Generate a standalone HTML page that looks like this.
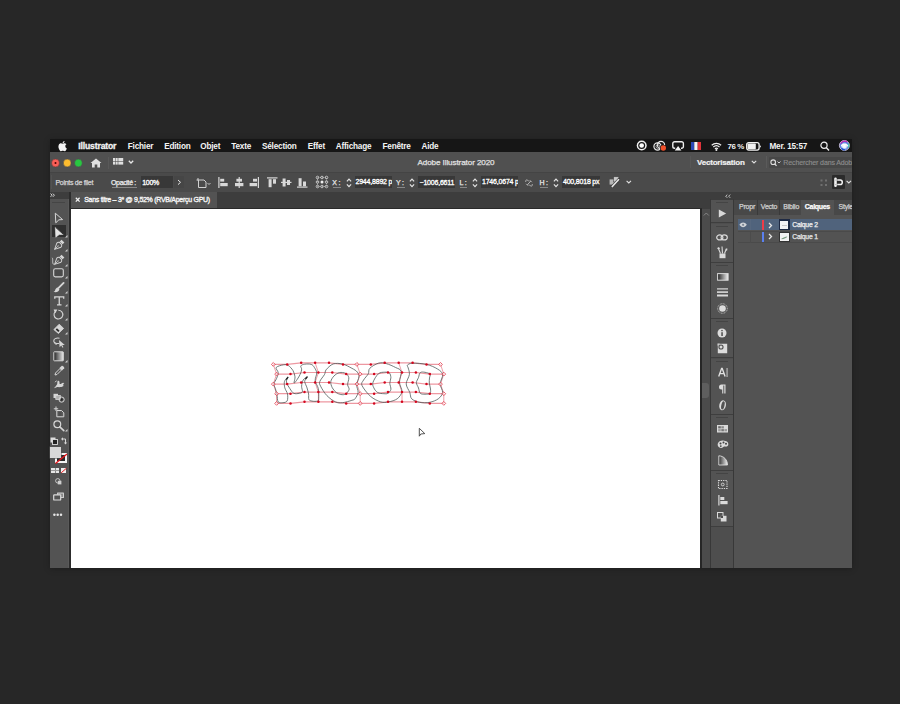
<!DOCTYPE html>
<html><head><meta charset="utf-8">
<style>
html,body{margin:0;padding:0;}
body{width:900px;height:704px;background:#272727;position:relative;overflow:hidden;font-family:"Liberation Sans",sans-serif;}
.a{position:absolute;}
.t{position:absolute;white-space:nowrap;line-height:10px;color:#e6e6e6;}
.mb{font-size:8.2px;font-weight:bold;color:#f4f4f4;top:141.7px;letter-spacing:-0.2px;}
.sm{font-size:7px;letter-spacing:-0.2px;color:#dcdcdc;-webkit-text-stroke:0.25px currentColor;}
svg{position:absolute;overflow:visible;}
</style></head>
<body>
<!-- window -->
<div class="a" style="left:50px;top:139px;width:802px;height:429px;background:#3d3d3d;box-shadow:0 1px 6px rgba(0,0,0,0.25);"></div>
<!-- menubar -->
<div class="a" style="left:50px;top:139px;width:802px;height:13px;background:#161616;"></div>
<!-- title bar -->
<div class="a" style="left:50px;top:152px;width:802px;height:20px;background:#505050;"></div>
<!-- control bar -->
<div class="a" style="left:50px;top:172px;width:802px;height:20px;background:#4a4a4a;border-top:1px solid #444;box-sizing:border-box;"></div>
<!-- below area -->
<div class="a" style="left:50px;top:192px;width:802px;height:376px;background:#3d3d3d;"></div>
<!-- left toolbar -->
<div class="a" style="left:50px;top:199px;width:19px;height:369px;background:#535353;"></div>
<div class="a" style="left:68px;top:199px;width:1px;height:369px;background:#5a5a5a;"></div>
<div class="a" style="left:69px;top:192px;width:2px;height:376px;background:#2c2c2c;"></div>
<!-- tab bar -->
<div class="a" style="left:71px;top:192px;width:629px;height:16px;background:#3d3d3d;"></div>
<div class="a" style="left:71px;top:192px;width:146px;height:16px;background:#535353;"></div>
<div class="a" style="left:71px;top:208px;width:631px;height:1px;background:#2a2a2a;"></div>
<!-- canvas -->
<div class="a" style="left:71px;top:209px;width:629px;height:359px;background:#ffffff;"></div>
<div class="a" style="left:700px;top:209px;width:2px;height:359px;background:#262626;"></div>
<!-- scrollbar col -->
<div class="a" style="left:702px;top:209px;width:8px;height:359px;background:#4b4b4b;"></div>
<div class="a" style="left:710px;top:199px;width:1px;height:369px;background:#383838;"></div>
<!-- icon column -->
<div class="a" style="left:711px;top:199.5px;width:22px;height:368.5px;background:#4e4e4e;"></div>
<div class="a" style="left:733px;top:199px;width:1px;height:369px;background:#383838;"></div>
<!-- panel -->
<div class="a" style="left:734px;top:199.5px;width:118px;height:15px;background:#444444;"></div>
<div class="a" style="left:734px;top:214.5px;width:118px;height:353.5px;background:#535353;"></div>

<!-- MENUBAR CONTENT -->
<svg style="left:58px;top:140.5px" width="9" height="10" viewBox="0 0 17 20"><path fill="#f4f4f4" d="M14.1 10.6c0-2.6 2.1-3.8 2.2-3.9-1.2-1.8-3.1-2-3.7-2-1.6-.2-3.1.9-3.9.9-.8 0-2-.9-3.3-.9C3.700 4.800 2.100 5.800 1.200 7.300-.6 10.500.7 15.200 2.500 17.800c.9 1.300 1.900 2.700 3.300 2.600 1.300-.1 1.800-.8 3.400-.8s2 .8 3.400.8c1.400 0 2.300-1.300 3.100-2.600 1-1.500 1.400-2.900 1.400-3-.1 0-2.900-1.100-3-4.200zM11.500 2.900C12.200 2.100 12.700.900 12.600-.2c-1 0-2.200.7-2.900 1.500-.6.700-1.200 1.900-1 3 1.100.1 2.200-.6 2.800-1.400z"/></svg>
<div class="t mb" style="left:78.3px;top:141.4px;font-size:8.6px;letter-spacing:-0.15px;-webkit-text-stroke:0.3px #f4f4f4;">Illustrator</div>
<div class="t mb" style="left:127.8px;">Fichier</div>
<div class="t mb" style="left:164.2px;">Edition</div>
<div class="t mb" style="left:200.3px;">Objet</div>
<div class="t mb" style="left:231.3px;">Texte</div>
<div class="t mb" style="left:262px;">Sélection</div>
<div class="t mb" style="left:307.8px;">Effet</div>
<div class="t mb" style="left:335.8px;">Affichage</div>
<div class="t mb" style="left:382.5px;">Fenêtre</div>
<div class="t mb" style="left:421.5px;">Aide</div>
<!-- status icons -->
<svg style="left:636px;top:140px" width="12" height="12"><circle cx="5.7" cy="5.5" r="5" fill="#f2f2f2"/><circle cx="5.7" cy="5.5" r="3.5" fill="#161616"/><circle cx="5.7" cy="5.5" r="2.3" fill="#ffffff"/></svg>
<svg style="left:653px;top:140px" width="15" height="12"><circle cx="4.5" cy="6.5" r="3.6" fill="none" stroke="#e8e8e8" stroke-width="1.2"/><circle cx="8" cy="5" r="3.6" fill="none" stroke="#e8e8e8" stroke-width="1.2"/><circle cx="4.8" cy="6.5" r="1.8" fill="none" stroke="#cfcfcf" stroke-width="0.8"/><circle cx="10.3" cy="8" r="3.3" fill="#161616"/><circle cx="10.3" cy="8" r="2.7" fill="#f0502a"/></svg>
<svg style="left:672px;top:140.5px" width="13" height="11"><path d="M3.2 7.2 H2.6 A1.8 1.8 0 0 1 0.8 5.4 V2.6 A1.8 1.8 0 0 1 2.6 0.8 H9.6 A1.8 1.8 0 0 1 11.4 2.6 V5.4 A1.8 1.8 0 0 1 9.6 7.2 H9" fill="none" stroke="#ececec" stroke-width="1.4"/><path d="M6.1 5 L9.4 9.6 H2.8 Z" fill="#f4f4f4"/></svg>
<svg style="left:691px;top:141.5px" width="10" height="8"><rect x="0" y="0" width="3.3" height="8" fill="#2a48b8"/><rect x="3.3" y="0" width="3.4" height="8" fill="#f4f4f4"/><rect x="6.7" y="0" width="3.3" height="8" fill="#e0333a"/></svg>
<svg style="left:710.5px;top:141.5px" width="11" height="9" viewBox="0 0 11 9"><path d="M0.7 3.2 A7 7 0 0 1 10.1 3.2" fill="none" stroke="#eee" stroke-width="1.2"/><path d="M2.3 5 A4.6 4.6 0 0 1 8.5 5" fill="none" stroke="#eee" stroke-width="1.2"/><path d="M3.9 6.7 A2.3 2.3 0 0 1 6.9 6.7" fill="none" stroke="#eee" stroke-width="1.2"/><circle cx="5.4" cy="8" r="1" fill="#eee"/></svg>
<div class="t mb" style="left:727.5px;letter-spacing:-0.4px;font-size:7.9px;">76 %</div>
<svg style="left:745.5px;top:141.5px" width="16" height="9"><rect x="0.7" y="0.7" width="12.4" height="7.4" rx="2" fill="none" stroke="#f2f2f2" stroke-width="1.3"/><rect x="1.6" y="1.6" width="8.2" height="5.6" rx="0.8" fill="#f2f2f2"/><path d="M13.8 2.8 L15 4.4 L13.8 6 Z" fill="#f2f2f2"/></svg>
<div class="t mb" style="left:769.5px;letter-spacing:-0.2px;">Mer. 15:57</div>
<svg style="left:820px;top:140.5px" width="10" height="11"><circle cx="4" cy="4.3" r="3.1" fill="none" stroke="#eee" stroke-width="1.2"/><path d="M6.2 6.6 L9 9.6" stroke="#eee" stroke-width="1.4"/></svg>
<svg style="left:838.5px;top:140px" width="11" height="11"><defs><radialGradient id="sr" cx="0.5" cy="0.55" r="0.55"><stop offset="0" stop-color="#ffffff"/><stop offset="0.35" stop-color="#e8f0ff"/><stop offset="0.7" stop-color="#4a7ae0"/><stop offset="1" stop-color="#9a40c8"/></radialGradient></defs><circle cx="5.4" cy="5.5" r="5" fill="url(#sr)" stroke="#d8d8e8" stroke-width="0.8"/><path d="M1.8 3.5 A4.4 4.4 0 0 1 8 1.8" fill="none" stroke="#c02cb0" stroke-width="1.4"/><path d="M9.2 3.5 A4.4 4.4 0 0 1 9.3 7.5" fill="none" stroke="#40c8b0" stroke-width="1.2"/><path d="M2.5 8.5 A4.4 4.4 0 0 0 6 9.8" fill="none" stroke="#2050c8" stroke-width="1.3"/><path d="M2 6.2 C3.5 4 4.5 4 5.5 5.3 C6.5 4 7.5 4 9 6.2" fill="none" stroke="#fff" stroke-width="1.1"/></svg>

<!-- TITLE BAR CONTENT -->
<svg style="left:50px;top:157px" width="40" height="12"><circle cx="5.5" cy="6" r="3.9" fill="#fc5f57" stroke="#5a3a3a" stroke-width="0.5"/><circle cx="5.5" cy="6" r="1" fill="#4d0000"/><circle cx="17.2" cy="6" r="3.9" fill="#fdbc2e" stroke="#3a4050" stroke-width="0.5"/><circle cx="28.4" cy="6" r="3.9" fill="#28c840" stroke="#503a50" stroke-width="0.5"/></svg>
<svg style="left:89.5px;top:157.5px" width="12" height="10"><path d="M0.5 5 L6 0.5 L11.5 5 L10 5 L10 9.5 L7.3 9.5 L7.3 6.5 L4.7 6.5 L4.7 9.5 L2 9.5 L2 5 Z" fill="#e0e0e0"/></svg>
<div class="a" style="left:107.5px;top:156.5px;width:1px;height:12px;background:#595959;"></div>
<svg style="left:112.8px;top:158.2px" width="11" height="7"><rect x="0" y="0" width="2.1" height="3" fill="#e0e0e0"/><rect x="2.6" y="0" width="2.1" height="3" fill="#e0e0e0"/><rect x="0" y="3.6" width="2.1" height="3" fill="#e0e0e0"/><rect x="2.6" y="3.6" width="2.1" height="3" fill="#e0e0e0"/><rect x="5.3" y="0" width="4.9" height="3" fill="#e0e0e0"/><rect x="5.3" y="3.6" width="4.9" height="3" fill="#e0e0e0"/></svg>
<svg style="left:127.6px;top:160px" width="7" height="5"><path d="M0.8 0.8 L3 3 L5.2 0.8" fill="none" stroke="#e8e8e8" stroke-width="1.3"/></svg>
<div class="t" style="left:417.5px;top:158px;font-size:8.1px;color:#e2e2e2;letter-spacing:-0.1px;-webkit-text-stroke:0.25px #e2e2e2;">Adobe Illustrator 2020</div>
<div class="a" style="left:690px;top:156px;width:1px;height:12px;background:#575757;"></div>
<div class="t" style="left:697px;top:157.5px;font-size:8px;font-weight:bold;color:#f0f0f0;letter-spacing:-0.2px;-webkit-text-stroke:0.2px #f0f0f0;">Vectorisation</div>
<svg style="left:751px;top:160px" width="7" height="5"><path d="M0.8 0.8 L3 3 L5.2 0.8" fill="none" stroke="#e0e0e0" stroke-width="1.1"/></svg>
<div class="a" style="left:766px;top:156px;width:1px;height:12px;background:#5a5a5a;"></div>
<div class="a" style="left:769px;top:157px;width:83px;height:11px;background:#474747;border-radius:1px;"></div>
<svg style="left:770px;top:158.5px" width="12" height="8"><circle cx="3.2" cy="3.2" r="2.3" fill="none" stroke="#dedede" stroke-width="1.1"/><path d="M4.8 4.8 L6.5 6.8" stroke="#dedede" stroke-width="1.2"/><path d="M7.5 2.5 L9 4 L10.5 2.5" fill="none" stroke="#dedede" stroke-width="0.9"/></svg>
<div style="position:absolute;left:769px;top:157px;width:83px;height:11px;overflow:hidden;"><div class="t" style="left:14.3px;top:1.3px;font-size:7px;color:#8c8c8c;letter-spacing:-0.12px;-webkit-text-stroke:0.15px #8c8c8c;">Rechercher dans Adobe Stock</div></div>

<!-- CONTROL BAR CONTENT -->
<div class="a" style="left:50.5px;top:175px;width:1px;height:14px;background:#525252;"></div>
<div class="t sm" style="left:55.5px;top:177.5px;letter-spacing:-0.3px;color:#d4d4d4;">Points de filet</div>
<div class="t sm" style="left:111px;top:177.5px;color:#ececec;letter-spacing:-0.35px;">Opacité :</div>
<div class="a" style="left:111.5px;top:186.5px;width:25px;height:0;border-top:1px solid rgba(210,210,210,0.45);"></div>
<div class="a" style="left:141px;top:176.2px;width:32.3px;height:11.6px;background:#383838;"></div>
<div class="t sm" style="left:142.3px;top:177.5px;color:#ffffff;-webkit-text-stroke:0.3px #fff;letter-spacing:-0.35px;">100%</div>
<div class="a" style="left:174.2px;top:176.2px;width:10px;height:11.6px;background:#464646;"></div>
<svg style="left:176.5px;top:179px" width="5" height="7"><path d="M1 1 L3.5 3.3 L1 5.6" fill="none" stroke="#e6e6e6" stroke-width="1"/></svg>
<!-- transform -->
<svg style="left:195.5px;top:176.5px" width="16" height="12"><path d="M2 1 V3.5 M0.5 3 H8 L10 5 V10.5 H2.5 V3" fill="none" stroke="#d0d0d0" stroke-width="1"/><path d="M11.5 6 L13 7.5 L14.5 6" fill="none" stroke="#d0d0d0" stroke-width="0.9"/></svg>
<!-- align icons -->
<svg style="left:218px;top:176.5px" width="11" height="11"><rect x="0.3" y="0" width="1.2" height="11" fill="#d8d8d8"/><rect x="2.2" y="1.8" width="4" height="2.8" fill="#d8d8d8"/><rect x="2.2" y="6" width="7.5" height="3.2" fill="#d8d8d8"/></svg>
<svg style="left:233.5px;top:176.5px" width="11" height="11"><rect x="4.6" y="0" width="1.2" height="11" fill="#d8d8d8"/><rect x="2.4" y="1.8" width="5.6" height="2.8" fill="#d8d8d8"/><rect x="1" y="6" width="8.4" height="3.2" fill="#d8d8d8"/></svg>
<svg style="left:248.5px;top:176.5px" width="11" height="11"><rect x="8.8" y="0" width="1.2" height="11" fill="#d8d8d8"/><rect x="4" y="1.8" width="4" height="2.8" fill="#d8d8d8"/><rect x="0.6" y="6" width="7.5" height="3.2" fill="#d8d8d8"/></svg>
<svg style="left:266.5px;top:176.5px" width="11" height="11"><rect x="0" y="0.3" width="10.5" height="1.2" fill="#d8d8d8"/><rect x="1.6" y="2.2" width="3" height="8" fill="#d8d8d8"/><rect x="6" y="2.2" width="3" height="4.5" fill="#d8d8d8"/></svg>
<svg style="left:281px;top:176.5px" width="11" height="11"><rect x="0" y="4.8" width="10.5" height="1.2" fill="#d8d8d8"/><rect x="1.6" y="1.5" width="3" height="8" fill="#d8d8d8"/><rect x="6" y="3" width="3" height="5" fill="#d8d8d8"/></svg>
<svg style="left:296.5px;top:176.5px" width="11" height="11"><rect x="0" y="9.5" width="10.5" height="1.2" fill="#d8d8d8"/><rect x="1.6" y="1.2" width="3" height="8" fill="#d8d8d8"/><rect x="6" y="4.5" width="3" height="4.8" fill="#d8d8d8"/></svg>
<!-- reference point -->
<svg style="left:315.5px;top:176px" width="12" height="12"><rect x="1.5" y="1.5" width="9" height="9" fill="none" stroke="#bcbcbc" stroke-width="0.8" stroke-dasharray="1.2 1.2"/><circle cx="1.5" cy="1.5" r="1.3" fill="none" stroke="#d8d8d8" stroke-width="0.8"/><circle cx="6" cy="1.5" r="1.3" fill="none" stroke="#d8d8d8" stroke-width="0.8"/><circle cx="10.5" cy="1.5" r="1.3" fill="none" stroke="#d8d8d8" stroke-width="0.8"/><circle cx="1.5" cy="6" r="1.3" fill="none" stroke="#d8d8d8" stroke-width="0.8"/><circle cx="6" cy="6" r="1.5" fill="#f0f0f0"/><circle cx="10.5" cy="6" r="1.3" fill="none" stroke="#d8d8d8" stroke-width="0.8"/><circle cx="1.5" cy="10.5" r="1.3" fill="none" stroke="#d8d8d8" stroke-width="0.8"/><circle cx="6" cy="10.5" r="1.3" fill="none" stroke="#d8d8d8" stroke-width="0.8"/><circle cx="10.5" cy="10.5" r="1.3" fill="none" stroke="#d8d8d8" stroke-width="0.8"/></svg>
<!-- X Y L H -->
<div class="t sm" style="left:332.2px;top:177.5px;color:#e8e8e8;">X :</div>
<div class="a" style="left:332.5px;top:186.8px;width:8px;height:0;border-top:1px solid rgba(210,210,210,0.45);"></div>
<svg style="left:345.5px;top:176.5px" width="7" height="12"><path d="M0.9 4.3 L3 2.1 L5.1 4.3 M0.9 7.4 L3 9.6 L5.1 7.4" fill="none" stroke="#e4e4e4" stroke-width="1.2"/></svg>
<div class="a" style="left:354.7px;top:176.2px;width:37px;height:11.6px;background:#383838;"></div>
<div class="a" style="left:354.7px;top:176.2px;width:37px;height:11.6px;overflow:hidden;"><div class="t sm" style="left:0.8px;top:1.3px;color:#ffffff;-webkit-text-stroke:0.3px #fff;">2944,8892 p</div></div>
<div class="t sm" style="left:396px;top:177.5px;color:#e8e8e8;">Y :</div>
<div class="a" style="left:396.5px;top:186.8px;width:8px;height:0;border-top:1px solid rgba(210,210,210,0.45);"></div>
<svg style="left:408.8px;top:176.5px" width="7" height="12"><path d="M0.9 4.3 L3 2.1 L5.1 4.3 M0.9 7.4 L3 9.6 L5.1 7.4" fill="none" stroke="#e4e4e4" stroke-width="1.2"/></svg>
<div class="a" style="left:418.3px;top:176.2px;width:36.7px;height:11.6px;background:#383838;"></div>
<div class="t sm" style="left:419.5px;top:177.5px;color:#ffffff;-webkit-text-stroke:0.3px #fff;">−1006,6611</div>
<div class="t sm" style="left:459.5px;top:177.5px;color:#e8e8e8;">L :</div>
<div class="a" style="left:459.7px;top:186.8px;width:7.5px;height:0;border-top:1px solid rgba(210,210,210,0.45);"></div>
<svg style="left:472.3px;top:176.5px" width="7" height="12"><path d="M0.9 4.3 L3 2.1 L5.1 4.3 M0.9 7.4 L3 9.6 L5.1 7.4" fill="none" stroke="#e4e4e4" stroke-width="1.2"/></svg>
<div class="a" style="left:481.3px;top:176.2px;width:37px;height:11.6px;background:#383838;"></div>
<div class="a" style="left:481.3px;top:176.2px;width:37px;height:11.6px;overflow:hidden;"><div class="t sm" style="left:0.7px;top:1.3px;color:#ffffff;-webkit-text-stroke:0.3px #fff;">1746,0674 p</div></div>
<svg style="left:524.5px;top:178.5px" width="8" height="8"><path d="M1 3 C0 2 1 0.5 2.5 1 L4 2.5 M4 5.5 L5.5 7 C7 7.5 8 6 7 5 M2.2 5.8 L5.8 2.2" fill="none" stroke="#bdbdbd" stroke-width="0.9"/><path d="M3.2 6.8 L1.2 4.8 M4.8 1.2 L6.8 3.2" stroke="#bdbdbd" stroke-width="0.9"/></svg>
<div class="t sm" style="left:539.5px;top:177.5px;color:#e8e8e8;">H :</div>
<div class="a" style="left:539.5px;top:186.8px;width:8px;height:0;border-top:1px solid rgba(210,210,210,0.45);"></div>
<svg style="left:553px;top:176.5px" width="7" height="12"><path d="M0.9 4.3 L3 2.1 L5.1 4.3 M0.9 7.4 L3 9.6 L5.1 7.4" fill="none" stroke="#e4e4e4" stroke-width="1.2"/></svg>
<div class="a" style="left:561.6px;top:176.2px;width:38.4px;height:11.6px;background:#383838;"></div>
<div class="a" style="left:561.6px;top:176.2px;width:38.4px;height:11.6px;overflow:hidden;"><div class="t sm" style="left:1.4px;top:1.3px;color:#ffffff;-webkit-text-stroke:0.3px #fff;">400,8018 px</div></div>
<svg style="left:609px;top:176px" width="12" height="12"><rect x="0.6" y="3.4" width="5.2" height="5.2" fill="#b8b8b8"/><rect x="4.6" y="0.8" width="5.2" height="5.2" fill="#c8c8c8" stroke="#3a3a3a" stroke-width="0.5"/><path d="M3.2 10.6 L9.6 3.6" stroke="#2e2e2e" stroke-width="2.8" stroke-linecap="round"/><path d="M3.2 10.6 L9.6 3.6" stroke="#e2e2e2" stroke-width="1.6" stroke-linecap="round"/></svg>
<svg style="left:626px;top:180px" width="6" height="5"><path d="M0.6 0.8 L2.8 3 L5 0.8" fill="none" stroke="#e0e0e0" stroke-width="1.1"/></svg>
<svg style="left:819.5px;top:178.5px" width="8" height="8"><rect x="0.5" y="0.5" width="2" height="2" fill="#707070"/><rect x="5" y="0.5" width="2" height="2" fill="#707070"/><rect x="0.5" y="5" width="2" height="2" fill="#707070"/><rect x="5" y="5" width="2" height="2" fill="#707070"/></svg>
<div class="a" style="left:832px;top:175.4px;width:13px;height:13.2px;background:#2b2b2b;border-radius:1px;"></div>
<svg style="left:833px;top:176px" width="12" height="12"><rect x="1.2" y="1.6" width="2.6" height="9.4" rx="1.2" fill="#f2f2f2"/><path d="M4.2 3.9 H7.2 C10 3.9 10 8.6 7.2 8.6 H4.2" fill="none" stroke="#f2f2f2" stroke-width="1.5"/><circle cx="2.5" cy="4" r="0.45" fill="#888"/><circle cx="2.5" cy="8.5" r="0.45" fill="#888"/></svg>
<svg style="left:846px;top:179.5px" width="6" height="5"><path d="M0.6 0.8 L2.8 3 L5 0.8" fill="none" stroke="#e0e0e0" stroke-width="1.1"/></svg>

<!-- TAB BAR -->
<svg style="left:74.5px;top:196.5px" width="6" height="6"><path d="M0.8 0.8 L4.6 4.6 M4.6 0.8 L0.8 4.6" stroke="#f0f0f0" stroke-width="1.25"/></svg>
<div class="t sm" style="left:84.2px;top:195px;color:#ececec;letter-spacing:-0.28px;-webkit-text-stroke:0.35px #f4f4f4;color:#f4f4f4;">Sans titre – 3* @ 9,52% (RVB/Aperçu GPU)</div>
<!-- toolbar header -->
<svg style="left:50px;top:193.3px" width="6" height="5"><path d="M0.6 0.6 L2.1 2.2 L0.6 3.8 M2.9 0.6 L4.4 2.2 L2.9 3.8" fill="none" stroke="#d8d8d8" stroke-width="1"/></svg>
<div class="a" style="left:52px;top:201.8px;width:12.5px;height:1.2px;background:#454545;"></div>
<!-- right header -->
<svg style="left:724.5px;top:193.5px" width="7" height="5"><path d="M2.3 0.6 L0.7 2.2 L2.3 3.8 M5.2 0.6 L3.6 2.2 L5.2 3.8" fill="none" stroke="#d0d0d0" stroke-width="0.9"/></svg>
<!-- scrollbar -->
<svg style="left:702.5px;top:212px" width="7" height="5"><path d="M0.8 3.5 L3.3 1 L5.8 3.5" fill="none" stroke="#8a8a8a" stroke-width="0.9"/></svg>
<div class="a" style="left:702px;top:383px;width:6.5px;height:15px;background:#5e5e5e;border-radius:0 3px 3px 0;"></div>

<!-- LEFT TOOLS -->
<svg style="left:54px;top:212px" width="10" height="12"><path d="M1.3 1.2 L8.6 7.6 L4.9 7.8 L1.8 10.8 Z" fill="none" stroke="#d6d6d6" stroke-width="1" stroke-linejoin="round"/></svg>
<div class="a" style="left:51.5px;top:225.2px;width:14.7px;height:11.7px;background:#2f2f2f;"></div>
<svg style="left:54px;top:225.5px" width="11" height="12"><path d="M1.3 1.2 L9.4 8.4 L5.2 8.6 L1.8 11.2 Z" fill="#e4e4e4" stroke="#e4e4e4" stroke-width="0.6" stroke-linejoin="round"/><path d="M1.5 1.2 L9.6 8.6" stroke="#111" stroke-width="0.8"/></svg>
<svg style="left:64.5px;top:234.5px" width="3" height="3"><path d="M2.5 0 V2.5 H0 Z" fill="#d0d0d0"/></svg>

<svg style="left:48.8px;top:234.7px" width="20" height="20"><g transform="translate(10 10)"><g transform="rotate(45)"><path d="M0 6.2 L-2.9 0.2 C-2.9 -1.3 -2.2 -1.8 -1.6 -2.2 H1.6 C2.2 -1.8 2.9 -1.3 2.9 0.2 Z" fill="none" stroke="#d6d6d6" stroke-width="0.95" stroke-linejoin="round"/><path d="M0 6 V1.8" stroke="#d6d6d6" stroke-width="0.8"/><circle cx="0" cy="1.2" r="0.55" fill="#d6d6d6"/><rect x="-2" y="-5.6" width="4" height="2.6" fill="#d6d6d6"/></g></g></svg>
<svg style="left:64.5px;top:248.5px" width="3" height="3"><path d="M2.5 0 V2.5 H0 Z" fill="#d0d0d0"/></svg>

<svg style="left:49.3px;top:249.6px" width="20" height="20"><g transform="translate(10 10)"><g transform="rotate(45)"><path d="M0 6.2 L-2.9 0.2 C-2.9 -1.3 -2.2 -1.8 -1.6 -2.2 H1.6 C2.2 -1.8 2.9 -1.3 2.9 0.2 Z" fill="none" stroke="#d6d6d6" stroke-width="0.95" stroke-linejoin="round"/><path d="M0 6 V1.8" stroke="#d6d6d6" stroke-width="0.8"/><circle cx="0" cy="1.2" r="0.55" fill="#d6d6d6"/><rect x="-2" y="-5.6" width="4" height="2.6" fill="#d6d6d6"/></g></g><path d="M5.3 14.6 C2.5 14 4.5 9.5 3.2 7.8" fill="none" stroke="#d6d6d6" stroke-width="0.9"/></svg>
<svg style="left:64.5px;top:263.5px" width="3" height="3"><path d="M2.5 0 V2.5 H0 Z" fill="#d0d0d0"/></svg>

<svg style="left:53px;top:268px" width="11" height="10"><rect x="0.7" y="0.7" width="9.6" height="8.2" rx="1.6" fill="#4a4a4a" stroke="#d6d6d6" stroke-width="1.1"/></svg>
<svg style="left:64.5px;top:276px" width="3" height="3"><path d="M2.5 0 V2.5 H0 Z" fill="#d0d0d0"/></svg>

<svg style="left:53px;top:281.5px" width="12" height="11"><path d="M10.6 0.9 L5.6 5.9" stroke="#d6d6d6" stroke-width="1.9" stroke-linecap="round"/><path d="M4.9 5.4 C3.3 5.6 2.4 6.8 2.2 8 C2 9 1.3 9.6 0.5 9.8 C2.8 10.6 6 10 6.4 7.2 Z" fill="#d6d6d6"/></svg>
<svg style="left:64.5px;top:290.5px" width="3" height="3"><path d="M2.5 0 V2.5 H0 Z" fill="#d0d0d0"/></svg>

<svg style="left:53.5px;top:295.8px" width="11" height="10"><path d="M0.8 2.8 V0.9 H9.7 V2.8 M5.25 0.9 V8.8 M3 8.8 H7.5" fill="none" stroke="#d6d6d6" stroke-width="1.3"/></svg>
<svg style="left:64.5px;top:304px" width="3" height="3"><path d="M2.5 0 V2.5 H0 Z" fill="#d0d0d0"/></svg>

<svg style="left:53.3px;top:309.3px" width="11" height="11"><path d="M2.2 2.6 A4.4 4.4 0 1 0 5.3 1.2" fill="none" stroke="#d6d6d6" stroke-width="1.1"/><path d="M0.6 0.4 L4.4 0.6 L2.3 4.2 Z" fill="#d6d6d6"/></svg>
<svg style="left:64.5px;top:318px" width="3" height="3"><path d="M2.5 0 V2.5 H0 Z" fill="#d0d0d0"/></svg>

<svg style="left:53px;top:323px" width="12" height="11"><path d="M0.9 6.6 L6.2 1.2 L10.6 5.4 L5.4 10.4 Z" fill="#d6d6d6" stroke="#d6d6d6" stroke-width="0.9" stroke-linejoin="round"/><path d="M2.6 6.6 L4 5.2 L6.6 7.8 L5.3 9 Z" fill="#2a2a2a"/></svg>
<svg style="left:64.5px;top:332px" width="3" height="3"><path d="M2.5 0 V2.5 H0 Z" fill="#d0d0d0"/></svg>

<svg style="left:52.5px;top:337px" width="13" height="11"><path d="M6.5 1.2 C3 0.5 0.5 2 0.8 4.2 C1 6 3.5 6.8 6 6.5" fill="none" stroke="#d6d6d6" stroke-width="1.1"/><path d="M2 5.5 C1.5 8 4 7.5 4.5 6.5" fill="none" stroke="#d6d6d6" stroke-width="0.9"/><path d="M6 3 L6.6 10.2 L8.2 8.6 L9.6 10.8 L10.4 10.3 L9.2 8.1 L11.8 8 Z" fill="#d6d6d6"/></svg>
<svg style="left:53px;top:351.3px" width="12" height="10.5"><defs><linearGradient id="tg" x1="0" x2="1"><stop offset="0" stop-color="#202020"/><stop offset="1" stop-color="#e8e8e8"/></linearGradient></defs><rect x="0.8" y="0.8" width="9.5" height="9" fill="url(#tg)" stroke="#d6d6d6" stroke-width="1" rx="0.5"/></svg>
<svg style="left:64.5px;top:360px" width="3" height="3"><path d="M2.5 0 V2.5 H0 Z" fill="#d0d0d0"/></svg>

<svg style="left:53.5px;top:364.5px" width="11" height="11"><path d="M1 10 L1.5 8 L6 3.5 L7.5 5 L3 9.5 Z" fill="none" stroke="#d6d6d6" stroke-width="1"/><path d="M5.5 3 L7.8 0.8 C8.5 0.2 10.8 2.5 10.2 3.2 L8 5.5 Z" fill="#d6d6d6"/></svg>
<svg style="left:52.8px;top:378.8px" width="12" height="10"><path d="M0.8 9.2 C2.5 8 3.2 6.5 4 5.5 C4.8 4.5 3.8 2.5 5 1.8 C6 1.2 6.8 2.5 6.5 4 C6.3 5.2 7.5 5.5 8.5 4.5 C9.5 3.5 11 3.6 11.3 4.6 C10.2 4.5 10 6 10.5 7 C9 8.2 6 8.3 4.2 8 C3 8.3 2 9 0.8 9.2 Z" fill="#d6d6d6"/><path d="M2.2 3.2 L3.6 1.6" stroke="#d6d6d6" stroke-width="1"/></svg>
<svg style="left:52.8px;top:392.8px" width="12" height="10"><rect x="0.5" y="0.8" width="4.5" height="4.2" fill="#d6d6d6"/><rect x="2.8" y="2.5" width="4.5" height="4" fill="#b0b0b0" stroke="#d6d6d6" stroke-width="0.8"/><circle cx="8.6" cy="6.6" r="2.6" fill="none" stroke="#d6d6d6" stroke-width="1"/><circle cx="8.6" cy="6.6" r="1.1" fill="#222"/></svg>
<svg style="left:52.5px;top:405.5px" width="12" height="12"><path d="M3 0.5 V5 M0.8 2.8 H5.2" stroke="#d6d6d6" stroke-width="1"/><path d="M3.8 4.5 H8.5 L10.8 6.8 V10.8 H3.8 Z" fill="#5c5c5c" stroke="#d6d6d6" stroke-width="1" stroke-linejoin="round"/><path d="M5.5 7 H8.5 M5.5 9 H8.5" stroke="#3a3a3a" stroke-width="0.8"/></svg>
<svg style="left:53px;top:420px" width="13" height="12"><circle cx="4.3" cy="4.3" r="3.4" fill="none" stroke="#d6d6d6" stroke-width="1.2"/><path d="M6.8 6.8 L10.8 10.6" stroke="#d6d6d6" stroke-width="1.6" stroke-linecap="round"/></svg>
<svg style="left:64.5px;top:429px" width="3" height="3"><path d="M2.5 0 V2.5 H0 Z" fill="#d0d0d0"/></svg>

<svg style="left:50px;top:436.5px" width="8" height="8"><rect x="0.5" y="0.5" width="5" height="5" fill="#ddd"/><rect x="2.5" y="2.5" width="5" height="5" fill="#222" stroke="#ddd" stroke-width="0.9"/></svg>
<svg style="left:61.3px;top:436.5px" width="7" height="8"><path d="M1 2 H4.5 V6.5" fill="none" stroke="#d6d6d6" stroke-width="1"/><path d="M0 2 L2 0.3 V3.7 Z M4.5 7.5 L2.8 5.5 H6.2 Z" fill="#d6d6d6"/></svg>
<div class="a" style="left:55px;top:452.8px;width:12.2px;height:10.6px;background:#f4f4f4;"></div>
<div class="a" style="left:57.4px;top:455px;width:7.4px;height:6.3px;background:#2a2a2a;"></div>
<div class="a" style="left:50px;top:447px;width:10.8px;height:10.8px;background:#d8d8d8;box-shadow:0 0 0 0.5px #555;"></div>
<svg style="left:55px;top:452.8px" width="13" height="11"><path d="M0.5 10.5 L12 1" stroke="#e8141a" stroke-width="1.3"/></svg>
<div class="a" style="left:50.8px;top:468px;width:7.9px;height:5.2px;background:#e6e6e6;"></div>
<div class="a" style="left:54.6px;top:468px;width:0.5px;height:5.2px;background:#888;"></div>
<div class="a" style="left:50.8px;top:470.4px;width:7.9px;height:0.5px;background:#999;"></div>
<div class="a" style="left:60.8px;top:468px;width:5.7px;height:5px;background:#f0f0f0;"></div>
<svg style="left:60.8px;top:468px" width="6" height="5"><path d="M0.2 4.8 L5.5 0.2" stroke="#e8141a" stroke-width="1"/></svg>
<svg style="left:54.8px;top:478px" width="7" height="7"><circle cx="2.8" cy="2.8" r="2.2" fill="none" stroke="#cfcfcf" stroke-width="0.9"/><rect x="2.8" y="2.8" width="3.6" height="3.6" fill="#cfcfcf"/></svg>
<svg style="left:52.5px;top:491.5px" width="12" height="9"><rect x="4" y="0.6" width="7" height="5.4" rx="0.6" fill="#cfcfcf"/><rect x="5" y="1.6" width="5" height="3.4" fill="#888"/><rect x="0.7" y="2.8" width="7" height="5.2" rx="0.6" fill="#535353" stroke="#dadada" stroke-width="1.2"/></svg>
<svg style="left:53.3px;top:513px" width="10" height="4"><circle cx="1.4" cy="1.7" r="1.25" fill="#e6e6e6"/><circle cx="4.7" cy="1.7" r="1.25" fill="#e6e6e6"/><circle cx="8" cy="1.7" r="1.25" fill="#e6e6e6"/></svg>
<!-- RIGHT ICON COLUMN -->
<div class="a" style="left:711px;top:200px;width:22px;height:23px;background:#535353;border-bottom:1px solid #3e3e3e;box-sizing:border-box;"></div>
<div class="a" style="left:716px;top:202.3px;width:11.5px;height:1.2px;background:#444;"></div>
<div class="a" style="left:711px;top:223.5px;width:22px;height:39.0px;background:#535353;border-bottom:1px solid #3e3e3e;box-sizing:border-box;"></div>
<div class="a" style="left:716px;top:225.8px;width:11.5px;height:1.2px;background:#444;"></div>
<div class="a" style="left:711px;top:263px;width:22px;height:55.5px;background:#535353;border-bottom:1px solid #3e3e3e;box-sizing:border-box;"></div>
<div class="a" style="left:716px;top:265.3px;width:11.5px;height:1.2px;background:#444;"></div>
<div class="a" style="left:711px;top:319px;width:22px;height:39px;background:#535353;border-bottom:1px solid #3e3e3e;box-sizing:border-box;"></div>
<div class="a" style="left:716px;top:321.3px;width:11.5px;height:1.2px;background:#444;"></div>
<div class="a" style="left:711px;top:358.5px;width:22px;height:56.0px;background:#535353;border-bottom:1px solid #3e3e3e;box-sizing:border-box;"></div>
<div class="a" style="left:716px;top:360.8px;width:11.5px;height:1.2px;background:#444;"></div>
<div class="a" style="left:711px;top:415px;width:22px;height:55.5px;background:#535353;border-bottom:1px solid #3e3e3e;box-sizing:border-box;"></div>
<div class="a" style="left:716px;top:417.3px;width:11.5px;height:1.2px;background:#444;"></div>
<div class="a" style="left:711px;top:471px;width:22px;height:56px;background:#535353;border-bottom:1px solid #3e3e3e;box-sizing:border-box;"></div>
<div class="a" style="left:716px;top:473.3px;width:11.5px;height:1.2px;background:#444;"></div>

<svg style="left:717.8px;top:208.5px" width="9" height="10"><path d="M0.8 0.6 L8.2 4.6 L0.8 8.6 Z" fill="#d8d8d8"/></svg>
<svg style="left:716px;top:233.5px" width="12" height="7"><ellipse cx="3.8" cy="3.4" rx="3.1" ry="2.5" fill="none" stroke="#dadada" stroke-width="1.2"/><ellipse cx="8.2" cy="3.4" rx="3.1" ry="2.5" fill="none" stroke="#dadada" stroke-width="1.2"/></svg>
<svg style="left:716.5px;top:246px" width="11" height="13"><path d="M2.5 7.5 H8.5 V12.2 H2.5 Z" fill="#dadada"/><path d="M3.5 7.5 L1 1.5 M5.5 7.5 L5 0.5 M7.5 7.5 L9.5 2.5" stroke="#dadada" stroke-width="1.1"/><path d="M0 3 L2 1 L3 3 Z M8.5 3.5 L10.5 2.5 L10 5 Z" fill="#dadada"/></svg>
<svg style="left:716.5px;top:272.5px" width="12" height="8"><defs><linearGradient id="rg" x1="0" x2="1"><stop offset="0" stop-color="#222"/><stop offset="1" stop-color="#f0f0f0"/></linearGradient></defs><rect x="0.6" y="0.6" width="10.5" height="6.6" fill="url(#rg)" stroke="#dadada" stroke-width="1"/></svg>
<svg style="left:716.5px;top:288px" width="11" height="9"><rect x="0" y="0.3" width="11" height="1.2" fill="#dadada"/><rect x="0" y="3.3" width="11" height="1.6" fill="#dadada"/><rect x="0" y="6.5" width="11" height="2" fill="#dadada"/></svg>
<svg style="left:716.5px;top:302.5px" width="11" height="11"><circle cx="5.5" cy="5.5" r="3.3" fill="#dcdcdc"/><circle cx="5.5" cy="5.5" r="4.8" fill="none" stroke="#c8c8c8" stroke-width="0.9" stroke-dasharray="0.9 0.7"/></svg>
<svg style="left:717px;top:328.3px" width="10" height="10"><circle cx="5" cy="5" r="4.5" fill="#dcdcdc"/><rect x="4.3" y="4.2" width="1.5" height="3.8" fill="#4d4d4d"/><circle cx="5" cy="2.6" r="0.8" fill="#4d4d4d"/></svg>
<svg style="left:717px;top:343px" width="11" height="11"><path d="M0.8 3 V10.2 H10.2 V0.8 H3" fill="#dcdcdc"/><circle cx="4" cy="4" r="2.6" fill="#4d4d4d"/><circle cx="4" cy="4" r="1.5" fill="#dcdcdc"/><path d="M0.5 0.5 L3 0.5 L0.5 3 Z" fill="#dcdcdc"/></svg>
<svg style="left:717.5px;top:368px" width="10" height="10"><path d="M0.7 8.4 L3.6 0.4 H4.2 L7.1 8.4 M1.9 5.6 H5.9" fill="none" stroke="#e0e0e0" stroke-width="1.35"/><rect x="8.6" y="0" width="0.9" height="9" fill="#d8d8d8"/></svg>
<svg style="left:717.8px;top:384px" width="8" height="10"><path d="M3.5 0.5 H7.5 V9.5 H6.3 V1.5 H5.3 V9.5 H4.2 V5.5 H3.5 A2.5 2.5 0 0 1 3.5 0.5 Z" fill="#dcdcdc"/></svg>
<svg style="left:717.5px;top:399.5px" width="10" height="11"><g transform="rotate(12 4.6 5.3)"><ellipse cx="4.6" cy="5.3" rx="3.3" ry="5" fill="#dcdcdc"/><ellipse cx="4.9" cy="5.3" rx="1.6" ry="4.2" fill="#535353"/></g></svg>
<svg style="left:717px;top:424.5px" width="11" height="8"><rect x="0" y="0" width="11" height="7.5" fill="#dadada"/><rect x="1.2" y="1.2" width="2.6" height="2.2" fill="#6a6a6a"/><rect x="4.3" y="1.2" width="2.6" height="2.2" fill="#8a8a8a"/><rect x="1.2" y="4.1" width="2.6" height="2.2" fill="#999"/><rect x="4.3" y="4.1" width="2.6" height="2.2" fill="#777"/><rect x="7.4" y="4.1" width="2.6" height="2.2" fill="#999"/></svg>
<svg style="left:716.5px;top:440.3px" width="12" height="9"><path d="M6 0.6 C2 0.3 0.3 3.5 0.8 5.5 C1.3 8 4.8 8.6 6 7.2 C6.8 5.8 8 6.8 9.6 6.6 C11.8 6.3 11.8 2.8 10.2 1.8 C9.2 1.1 7.6 0.7 6 0.6 Z" fill="#dadada"/><circle cx="3.5" cy="3.6" r="1" fill="#444"/><circle cx="6.5" cy="2.5" r="1" fill="#444"/><circle cx="9" cy="3.8" r="1" fill="#444"/><circle cx="3.8" cy="6.1" r="0.9" fill="#444"/></svg>
<svg style="left:717.5px;top:455.3px" width="10" height="11"><defs><linearGradient id="cg" x1="0" x2="1"><stop offset="0" stop-color="#333"/><stop offset="1" stop-color="#eee"/></linearGradient></defs><path d="M0.8 0.8 C6 1 9.5 5 9.5 10 H0.8 Z" fill="url(#cg)" stroke="#dadada" stroke-width="0.9"/></svg>
<svg style="left:716.5px;top:479px" width="12" height="11"><rect x="1.5" y="1.5" width="8.5" height="8" fill="none" stroke="#dadada" stroke-width="1.1" stroke-dasharray="1.3 1"/><circle cx="5.75" cy="5.5" r="1.4" fill="none" stroke="#dadada" stroke-width="0.9"/></svg>
<svg style="left:717.5px;top:495px" width="10" height="10.5"><rect x="0.3" y="0" width="1.2" height="10.5" fill="#dadada"/><rect x="2.3" y="2" width="4" height="3" fill="#dadada"/><rect x="2.3" y="6" width="7.3" height="3.2" fill="#dadada"/></svg>
<svg style="left:717.3px;top:512px" width="10" height="10"><rect x="0.5" y="0.5" width="5.5" height="5.5" fill="none" stroke="#dadada" stroke-width="1"/><rect x="3.8" y="3.8" width="5.7" height="5.7" fill="#dadada"/><rect x="3.8" y="3.8" width="2.2" height="2.2" fill="#4d4d4d"/></svg>

<!-- PANEL -->
<div class="a" style="left:734px;top:199.5px;width:23px;height:15px;background:#484848;"></div>
<div class="a" style="left:757px;top:199.5px;width:1px;height:15px;background:#3a3a3a;"></div>
<div class="a" style="left:758px;top:199.5px;width:21px;height:15px;background:#484848;"></div>
<div class="a" style="left:779px;top:199.5px;width:1px;height:15px;background:#3a3a3a;"></div>
<div class="a" style="left:780px;top:199.5px;width:21px;height:15px;background:#484848;"></div>
<div class="a" style="left:801px;top:199.5px;width:33px;height:15px;background:#535353;"></div>
<div class="a" style="left:834px;top:199.5px;width:18px;height:15px;background:#484848;"></div>
<div class="t sm" style="left:739px;top:202px;color:#d0d0d0;">Propr</div>
<div class="t sm" style="left:760.8px;top:202px;color:#d0d0d0;">Vecto</div>
<div class="t sm" style="left:783.2px;top:202px;color:#d0d0d0;">Biblio</div>
<div class="t sm" style="left:804.8px;top:202px;color:#ffffff;font-weight:bold;letter-spacing:-0.3px;">Calques</div>
<div style="position:absolute;left:834px;top:199.5px;width:18px;height:15px;overflow:hidden;"><div class="t sm" style="left:4.5px;top:2.5px;color:#d0d0d0;">Styles</div></div>
<!-- layer rows -->
<div class="a" style="left:737.5px;top:219.3px;width:114.5px;height:11.2px;background:#50637c;"></div>
<div class="a" style="left:737.5px;top:231px;width:114.5px;height:11.5px;background:#535353;border-bottom:1px solid #4a4a4a;box-sizing:border-box;"></div>
<div class="a" style="left:749.5px;top:219.3px;width:0.8px;height:11.2px;background:#56677e;"></div><div class="a" style="left:749.5px;top:231px;width:0.8px;height:11.5px;background:#4c4c4c;"></div>
<div class="a" style="left:737.5px;top:230.5px;width:114.5px;height:0.6px;background:#4a4a4a;"></div>
<svg style="left:739px;top:221.8px" width="9" height="6"><path d="M0.4 2.8 C2.5 -0.4 5.7 -0.4 7.8 2.8 C5.7 6 2.5 6 0.4 2.8 Z" fill="#cfd3d8"/><circle cx="4.1" cy="2.8" r="1.1" fill="#7a8594"/></svg>
<div class="a" style="left:762.4px;top:219.8px;width:2.1px;height:9.9px;background:#ee3c48;"></div>
<div class="a" style="left:762.4px;top:231.8px;width:2.1px;height:10.2px;background:#5a80f0;"></div>
<svg style="left:768.3px;top:221.5px" width="5" height="7"><path d="M1 1 L3.5 3.5 L1 6" fill="none" stroke="#e6e6e6" stroke-width="1.3"/></svg>
<svg style="left:768.3px;top:233.3px" width="5" height="7"><path d="M1 1 L3.5 3.5 L1 6" fill="none" stroke="#e6e6e6" stroke-width="1.3"/></svg>
<div class="a" style="left:779px;top:219.3px;width:10.5px;height:11.2px;background:#1e2a44;"></div>
<div class="a" style="left:780.2px;top:220.5px;width:8.2px;height:8.8px;background:#f4f4f4;"></div>
<div class="a" style="left:781.5px;top:224.5px;width:5.5px;height:0.8px;background:#c8c8c8;"></div>
<div class="a" style="left:779px;top:232px;width:10.5px;height:10.3px;background:#333;"></div>
<div class="a" style="left:780px;top:233px;width:8.5px;height:8.3px;background:#f2f2f2;"></div>
<svg style="left:780px;top:233px" width="9" height="9"><path d="M1.5 5.6 C3 4.5 6 3.2 7.4 3.4 C7 4.8 4 6 1.5 6.2 Z" fill="#7a9a80"/></svg>
<div class="t sm" style="left:792.2px;top:220px;color:#f0f0f0;font-size:6.8px;">Calque 2</div>
<div class="t sm" style="left:792.2px;top:232px;color:#e6e6e6;font-size:6.8px;">Calque 1</div>
<!-- ART -->
<svg style="left:0;top:0" width="900" height="704">
<path d="M273.3 364.4 L287.2 364.4 L301.2 362.8 L315.1 362.8 L329.0 362.8 L343.0 364.4 L356.9 364.4 L370.8 364.4 L384.7 362.8 L398.7 362.8 L412.6 362.8 L426.5 364.4 L440.5 364.4" fill="none" stroke="#e25868" stroke-opacity="0.62" stroke-width="1.2"/>
<path d="M276.6 374.1 L290.5 374.1 L304.5 372.5 L318.4 372.5 L332.3 372.5 L346.2 374.1 L360.2 374.1 L374.1 374.1 L388.0 372.5 L402.0 372.5 L415.9 372.5 L429.8 374.1 L443.8 374.1" fill="none" stroke="#e25868" stroke-opacity="0.62" stroke-width="1.2"/>
<path d="M273.3 384.1 L287.2 384.1 L301.2 382.5 L315.1 382.5 L329.0 382.5 L343.0 384.1 L356.9 384.1 L370.8 384.1 L384.7 382.5 L398.7 382.5 L412.6 382.5 L426.5 384.1 L440.5 384.1" fill="none" stroke="#e25868" stroke-opacity="0.62" stroke-width="1.2"/>
<path d="M276.6 393.7 L290.5 393.7 L304.5 392.1 L318.4 392.1 L332.3 392.1 L346.2 393.7 L360.2 393.7 L374.1 393.7 L388.0 392.1 L402.0 392.1 L415.9 392.1 L429.8 393.7 L443.8 393.7" fill="none" stroke="#e25868" stroke-opacity="0.62" stroke-width="1.2"/>
<path d="M276.6 403.4 L290.5 403.4 L304.5 401.8 L318.4 401.8 L332.3 401.8 L346.2 403.4 L360.2 403.4 L374.1 403.4 L388.0 401.8 L402.0 401.8 L415.9 401.8 L429.8 403.4 L443.8 403.4" fill="none" stroke="#e25868" stroke-opacity="0.62" stroke-width="1.2"/>
<path d="M273.3 364.4 L276.6 374.1 L273.3 384.1 L276.6 393.7 L276.6 403.4" fill="none" stroke="#e06070" stroke-opacity="0.6" stroke-width="1"/>
<path d="M315.1 362.8 L318.4 372.5 L315.1 382.5 L318.4 392.1 L318.4 401.8" fill="none" stroke="#e06070" stroke-opacity="0.6" stroke-width="1"/>
<path d="M356.9 364.4 L360.2 374.1 L356.9 384.1 L360.2 393.7 L360.2 403.4" fill="none" stroke="#e06070" stroke-opacity="0.6" stroke-width="1"/>
<path d="M398.7 362.8 L402.0 372.5 L398.7 382.5 L402.0 392.1 L402.0 401.8" fill="none" stroke="#e06070" stroke-opacity="0.6" stroke-width="1"/>
<path d="M440.5 364.4 L443.8 374.1 L440.5 384.1 L443.8 393.7 L443.8 403.4" fill="none" stroke="#e06070" stroke-opacity="0.6" stroke-width="1"/>
<path d="M276.2 367.5 C277.1 366.2 281.6 365.1 283.6 364.8 C285.6 364.5 286.7 364.5 288.3 365.5 C289.9 366.5 291.9 368.7 293.0 370.6 C294.1 372.5 294.8 374.8 295.0 376.9 C295.2 379.0 293.5 383.2 294.2 383.1 C294.9 383.0 298.1 378.2 299.3 376.0 C300.5 373.8 301.4 371.5 301.6 369.8 C301.9 368.1 300.3 366.8 300.8 365.9 C301.3 365.0 303.0 364.4 304.7 364.2 C306.4 363.9 309.6 363.8 311.2 364.4 C312.9 364.9 313.5 366.1 314.4 367.5 C315.3 368.9 316.6 370.8 316.7 373.0 C316.8 375.2 314.9 378.2 315.2 380.8 C315.5 383.4 317.7 385.6 318.3 388.6 C318.9 391.6 318.8 396.7 318.7 398.8 C318.6 400.8 318.6 400.7 317.5 401.1 C316.4 401.5 313.4 401.4 312.0 401.1 C310.6 400.8 309.5 400.7 308.9 399.5 C308.3 398.3 308.9 395.9 308.6 394.0 C308.3 392.1 307.6 389.9 307.0 387.8 C306.4 385.7 304.8 383.3 304.7 381.6 C304.6 379.9 306.6 378.0 306.3 377.7 C306.1 377.4 304.0 378.6 303.2 380.0 C302.4 381.4 301.7 384.3 301.6 386.2 C301.5 388.2 302.8 390.5 302.4 391.7 C302.0 392.9 300.7 393.0 299.2 393.3 C297.8 393.6 295.4 394.1 293.8 393.3 C292.2 392.5 291.1 390.5 289.9 388.6 C288.7 386.8 286.8 384.0 286.4 382.2 C286.0 380.4 287.9 377.9 287.6 377.8 C287.3 377.7 285.0 379.7 284.5 381.4 C284.0 383.1 284.3 385.7 284.8 387.8 C285.3 389.9 287.1 391.8 287.5 394.0 C287.9 396.2 287.9 399.6 287.1 401.0 C286.3 402.4 284.3 402.6 282.8 402.7 C281.3 402.8 279.2 403.2 278.2 401.9 C277.2 400.6 277.5 397.0 277.0 394.8 C276.5 392.6 275.9 390.4 275.4 388.6 C274.9 386.8 273.7 385.6 273.9 383.9 C274.1 382.2 275.9 380.3 276.6 378.4 C277.3 376.5 278.3 374.4 278.2 372.6 C278.1 370.8 275.3 368.8 276.2 367.5Z" fill="none" stroke="#4c5656" stroke-opacity="0.82" stroke-width="0.95"/>
<path d="M326.1 369.8 C327.5 368.1 330.4 365.0 333.1 364.0 C335.8 363.0 339.4 363.3 342.5 364.0 C345.6 364.7 349.4 367.0 351.9 368.3 C354.4 369.6 356.1 370.6 357.3 372.0 C358.5 373.4 359.0 374.8 358.9 376.9 C358.8 379.0 356.7 382.1 356.6 384.7 C356.5 387.3 358.4 390.2 358.1 392.5 C357.8 394.8 356.0 397.4 355.0 398.8 C354.0 400.1 354.0 399.6 351.9 400.3 C349.8 401.0 345.2 402.4 342.5 402.7 C339.8 403.0 338.1 403.1 335.5 401.9 C332.9 400.7 329.4 398.2 326.9 395.6 C324.4 393.0 321.8 388.6 320.6 386.2 C319.4 383.9 319.2 383.6 319.8 381.6 C320.4 379.6 323.4 376.5 324.5 374.5 C325.6 372.5 324.7 371.6 326.1 369.8Z" fill="none" stroke="#4c5656" stroke-opacity="0.82" stroke-width="0.95"/>
<path d="M330.8 381.6 C331.1 379.7 332.5 377.6 333.9 376.1 C335.3 374.6 337.4 373.1 339.4 372.6 C341.3 372.2 344.0 372.5 345.6 373.4 C347.2 374.2 348.4 375.8 348.8 377.7 C349.1 379.6 347.5 382.8 347.6 384.7 C347.7 386.6 349.4 387.8 349.1 389.4 C348.8 390.9 347.0 393.1 345.6 394.0 C344.2 394.9 342.5 394.8 340.9 394.5 C339.3 394.2 337.7 393.6 336.2 392.5 C334.8 391.4 333.2 389.6 332.3 387.8 C331.4 386.0 330.5 383.6 330.8 381.6Z" fill="none" stroke="#4c5656" stroke-opacity="0.82" stroke-width="0.95"/>
<path d="M369.8 368.3 C371.5 366.5 375.7 364.0 378.4 363.2 C381.1 362.4 383.4 362.9 386.2 363.6 C389.1 364.3 393.1 366.2 395.6 367.5 C398.1 368.8 400.5 368.9 401.1 371.4 C401.8 373.9 399.4 378.9 399.5 382.3 C399.6 385.7 402.3 389.0 401.9 391.7 C401.5 394.4 399.4 397.1 397.2 398.8 C395.0 400.4 391.3 401.4 388.6 401.9 C385.9 402.4 383.8 402.8 380.8 401.9 C377.8 401.0 373.7 399.1 370.6 396.4 C367.5 393.7 363.2 388.2 362.0 385.5 C360.8 382.8 362.6 382.0 363.6 380.0 C364.7 378.0 367.3 375.7 368.3 373.8 C369.3 371.8 368.1 370.1 369.8 368.3Z" fill="none" stroke="#4c5656" stroke-opacity="0.82" stroke-width="0.95"/>
<path d="M373.0 382.3 C373.8 380.0 376.4 375.4 378.4 373.8 C380.3 372.1 382.9 372.3 384.7 372.2 C386.5 372.1 388.4 372.1 389.4 373.0 C390.4 373.9 390.8 376.0 390.9 377.7 C391.0 379.4 389.8 381.2 389.8 383.1 C389.8 385.1 391.2 387.7 390.9 389.4 C390.6 391.1 389.0 392.6 387.8 393.3 C386.6 394.0 385.6 393.8 383.9 393.7 C382.2 393.6 379.4 393.5 377.7 392.5 C376.0 391.5 374.5 389.5 373.8 387.8 C373.0 386.1 372.2 384.6 373.0 382.3Z" fill="none" stroke="#4c5656" stroke-opacity="0.82" stroke-width="0.95"/>
<path d="M407.4 365.2 C408.1 364.4 409.3 363.3 412.5 363.2 C415.7 363.1 422.4 363.4 426.6 364.4 C430.8 365.4 434.8 367.3 437.5 369.0 C440.2 370.7 442.2 372.0 442.6 374.5 C443.1 377.0 440.2 380.9 440.2 383.9 C440.2 386.9 442.9 390.0 442.6 392.5 C442.3 395.0 440.5 397.1 438.3 398.8 C436.1 400.4 432.8 401.7 429.7 402.3 C426.6 402.9 422.5 402.9 419.5 402.3 C416.5 401.7 413.3 400.4 411.7 398.8 C410.1 397.1 410.7 395.0 409.8 392.5 C408.9 390.0 406.3 386.9 406.2 383.9 C406.2 380.9 409.1 377.2 409.4 374.5 C409.7 371.8 408.5 369.4 408.2 367.9 C407.9 366.3 406.7 366.0 407.4 365.2Z" fill="none" stroke="#4c5656" stroke-opacity="0.82" stroke-width="0.95"/>
<path d="M420.3 372.6 C421.4 371.7 423.4 372.1 425.0 372.3 C426.6 372.6 429.2 373.2 430.0 374.1 C430.8 375.1 429.6 376.5 429.5 378.0 C429.4 379.5 429.1 381.3 429.3 383.1 C429.5 384.9 430.4 387.3 430.5 389.0 C430.6 390.7 430.9 392.4 430.0 393.3 C429.1 394.2 426.6 394.2 425.0 394.2 C423.4 394.2 421.4 394.3 420.3 393.3 C419.2 392.3 419.1 389.8 418.5 388.0 C417.9 386.2 416.4 384.4 416.4 382.7 C416.4 380.9 417.9 379.2 418.5 377.5 C419.1 375.8 419.2 373.5 420.3 372.6Z" fill="none" stroke="#4c5656" stroke-opacity="0.82" stroke-width="0.95"/>
<path d="M286.2 379.5 L288.2 376.8 M305.5 379 L307.5 376.5" stroke="#222" stroke-width="1.3"/>
<path d="M273.3 362.5 L275.2 364.4 L273.3 366.3 L271.4 364.4 Z" fill="#fff" fill-opacity="0.6" stroke="#e23a4c" stroke-width="0.8"/>
<circle cx="287.2" cy="364.4" r="1.25" fill="#d4061e"/>
<circle cx="301.2" cy="362.8" r="1.25" fill="#d4061e"/>
<circle cx="315.1" cy="362.8" r="1.25" fill="#d4061e"/>
<circle cx="329.0" cy="362.8" r="1.25" fill="#d4061e"/>
<circle cx="343.0" cy="364.4" r="1.25" fill="#d4061e"/>
<path d="M356.9 362.5 L358.8 364.4 L356.9 366.3 L355.0 364.4 Z" fill="#fff" fill-opacity="0.6" stroke="#e23a4c" stroke-width="0.8"/>
<circle cx="370.8" cy="364.4" r="1.25" fill="#d4061e"/>
<circle cx="384.7" cy="362.8" r="1.25" fill="#d4061e"/>
<circle cx="398.7" cy="362.8" r="1.25" fill="#d4061e"/>
<circle cx="412.6" cy="362.8" r="1.25" fill="#d4061e"/>
<circle cx="426.5" cy="364.4" r="1.25" fill="#d4061e"/>
<path d="M440.5 362.5 L442.4 364.4 L440.5 366.3 L438.6 364.4 Z" fill="#fff" fill-opacity="0.6" stroke="#e23a4c" stroke-width="0.8"/>
<path d="M276.6 372.2 L278.5 374.1 L276.6 376.0 L274.7 374.1 Z" fill="#fff" fill-opacity="0.6" stroke="#e23a4c" stroke-width="0.8"/>
<circle cx="290.5" cy="374.1" r="1.25" fill="#d4061e"/>
<circle cx="304.5" cy="372.5" r="1.25" fill="#d4061e"/>
<circle cx="318.4" cy="372.5" r="1.25" fill="#d4061e"/>
<circle cx="332.3" cy="372.5" r="1.25" fill="#d4061e"/>
<circle cx="346.2" cy="374.1" r="1.25" fill="#d4061e"/>
<path d="M360.2 372.2 L362.1 374.1 L360.2 376.0 L358.3 374.1 Z" fill="#fff" fill-opacity="0.6" stroke="#e23a4c" stroke-width="0.8"/>
<circle cx="374.1" cy="374.1" r="1.25" fill="#d4061e"/>
<circle cx="388.0" cy="372.5" r="1.25" fill="#d4061e"/>
<circle cx="402.0" cy="372.5" r="1.25" fill="#d4061e"/>
<circle cx="415.9" cy="372.5" r="1.25" fill="#d4061e"/>
<circle cx="429.8" cy="374.1" r="1.25" fill="#d4061e"/>
<path d="M443.8 372.2 L445.7 374.1 L443.8 376.0 L441.9 374.1 Z" fill="#fff" fill-opacity="0.6" stroke="#e23a4c" stroke-width="0.8"/>
<path d="M273.3 382.2 L275.2 384.1 L273.3 386.0 L271.4 384.1 Z" fill="#fff" fill-opacity="0.6" stroke="#e23a4c" stroke-width="0.8"/>
<circle cx="287.2" cy="384.1" r="1.25" fill="#d4061e"/>
<circle cx="301.2" cy="382.5" r="1.25" fill="#d4061e"/>
<circle cx="315.1" cy="382.5" r="1.25" fill="#d4061e"/>
<circle cx="329.0" cy="382.5" r="1.25" fill="#d4061e"/>
<circle cx="343.0" cy="384.1" r="1.25" fill="#d4061e"/>
<path d="M356.9 382.2 L358.8 384.1 L356.9 386.0 L355.0 384.1 Z" fill="#fff" fill-opacity="0.6" stroke="#e23a4c" stroke-width="0.8"/>
<circle cx="370.8" cy="384.1" r="1.25" fill="#d4061e"/>
<circle cx="384.7" cy="382.5" r="1.25" fill="#d4061e"/>
<circle cx="398.7" cy="382.5" r="1.25" fill="#d4061e"/>
<circle cx="412.6" cy="382.5" r="1.25" fill="#d4061e"/>
<circle cx="426.5" cy="384.1" r="1.25" fill="#d4061e"/>
<path d="M440.5 382.2 L442.4 384.1 L440.5 386.0 L438.6 384.1 Z" fill="#fff" fill-opacity="0.6" stroke="#e23a4c" stroke-width="0.8"/>
<path d="M276.6 391.8 L278.5 393.7 L276.6 395.6 L274.7 393.7 Z" fill="#fff" fill-opacity="0.6" stroke="#e23a4c" stroke-width="0.8"/>
<circle cx="290.5" cy="393.7" r="1.25" fill="#d4061e"/>
<circle cx="304.5" cy="392.1" r="1.25" fill="#d4061e"/>
<circle cx="318.4" cy="392.1" r="1.25" fill="#d4061e"/>
<circle cx="332.3" cy="392.1" r="1.25" fill="#d4061e"/>
<circle cx="346.2" cy="393.7" r="1.25" fill="#d4061e"/>
<path d="M360.2 391.8 L362.1 393.7 L360.2 395.6 L358.3 393.7 Z" fill="#fff" fill-opacity="0.6" stroke="#e23a4c" stroke-width="0.8"/>
<circle cx="374.1" cy="393.7" r="1.25" fill="#d4061e"/>
<circle cx="388.0" cy="392.1" r="1.25" fill="#d4061e"/>
<circle cx="402.0" cy="392.1" r="1.25" fill="#d4061e"/>
<circle cx="415.9" cy="392.1" r="1.25" fill="#d4061e"/>
<circle cx="429.8" cy="393.7" r="1.25" fill="#d4061e"/>
<path d="M443.8 391.8 L445.7 393.7 L443.8 395.6 L441.9 393.7 Z" fill="#fff" fill-opacity="0.6" stroke="#e23a4c" stroke-width="0.8"/>
<path d="M276.6 401.5 L278.5 403.4 L276.6 405.3 L274.7 403.4 Z" fill="#fff" fill-opacity="0.6" stroke="#e23a4c" stroke-width="0.8"/>
<circle cx="290.5" cy="403.4" r="1.25" fill="#d4061e"/>
<circle cx="304.5" cy="401.8" r="1.25" fill="#d4061e"/>
<circle cx="318.4" cy="401.8" r="1.25" fill="#d4061e"/>
<circle cx="332.3" cy="401.8" r="1.25" fill="#d4061e"/>
<circle cx="346.2" cy="403.4" r="1.25" fill="#d4061e"/>
<path d="M360.2 401.5 L362.1 403.4 L360.2 405.3 L358.3 403.4 Z" fill="#fff" fill-opacity="0.6" stroke="#e23a4c" stroke-width="0.8"/>
<circle cx="374.1" cy="403.4" r="1.25" fill="#d4061e"/>
<circle cx="388.0" cy="401.8" r="1.25" fill="#d4061e"/>
<circle cx="402.0" cy="401.8" r="1.25" fill="#d4061e"/>
<circle cx="415.9" cy="401.8" r="1.25" fill="#d4061e"/>
<circle cx="429.8" cy="403.4" r="1.25" fill="#d4061e"/>
<path d="M443.8 401.5 L445.7 403.4 L443.8 405.3 L441.9 403.4 Z" fill="#fff" fill-opacity="0.6" stroke="#e23a4c" stroke-width="0.8"/>
<path d="M419.3 428.3 L424.8 433.6 L420.8 434 L419.3 436.2 Z" fill="#fff" stroke="#404040" stroke-width="0.9" stroke-linejoin="round"/>
</svg>
<!-- /ART -->
</body></html>
